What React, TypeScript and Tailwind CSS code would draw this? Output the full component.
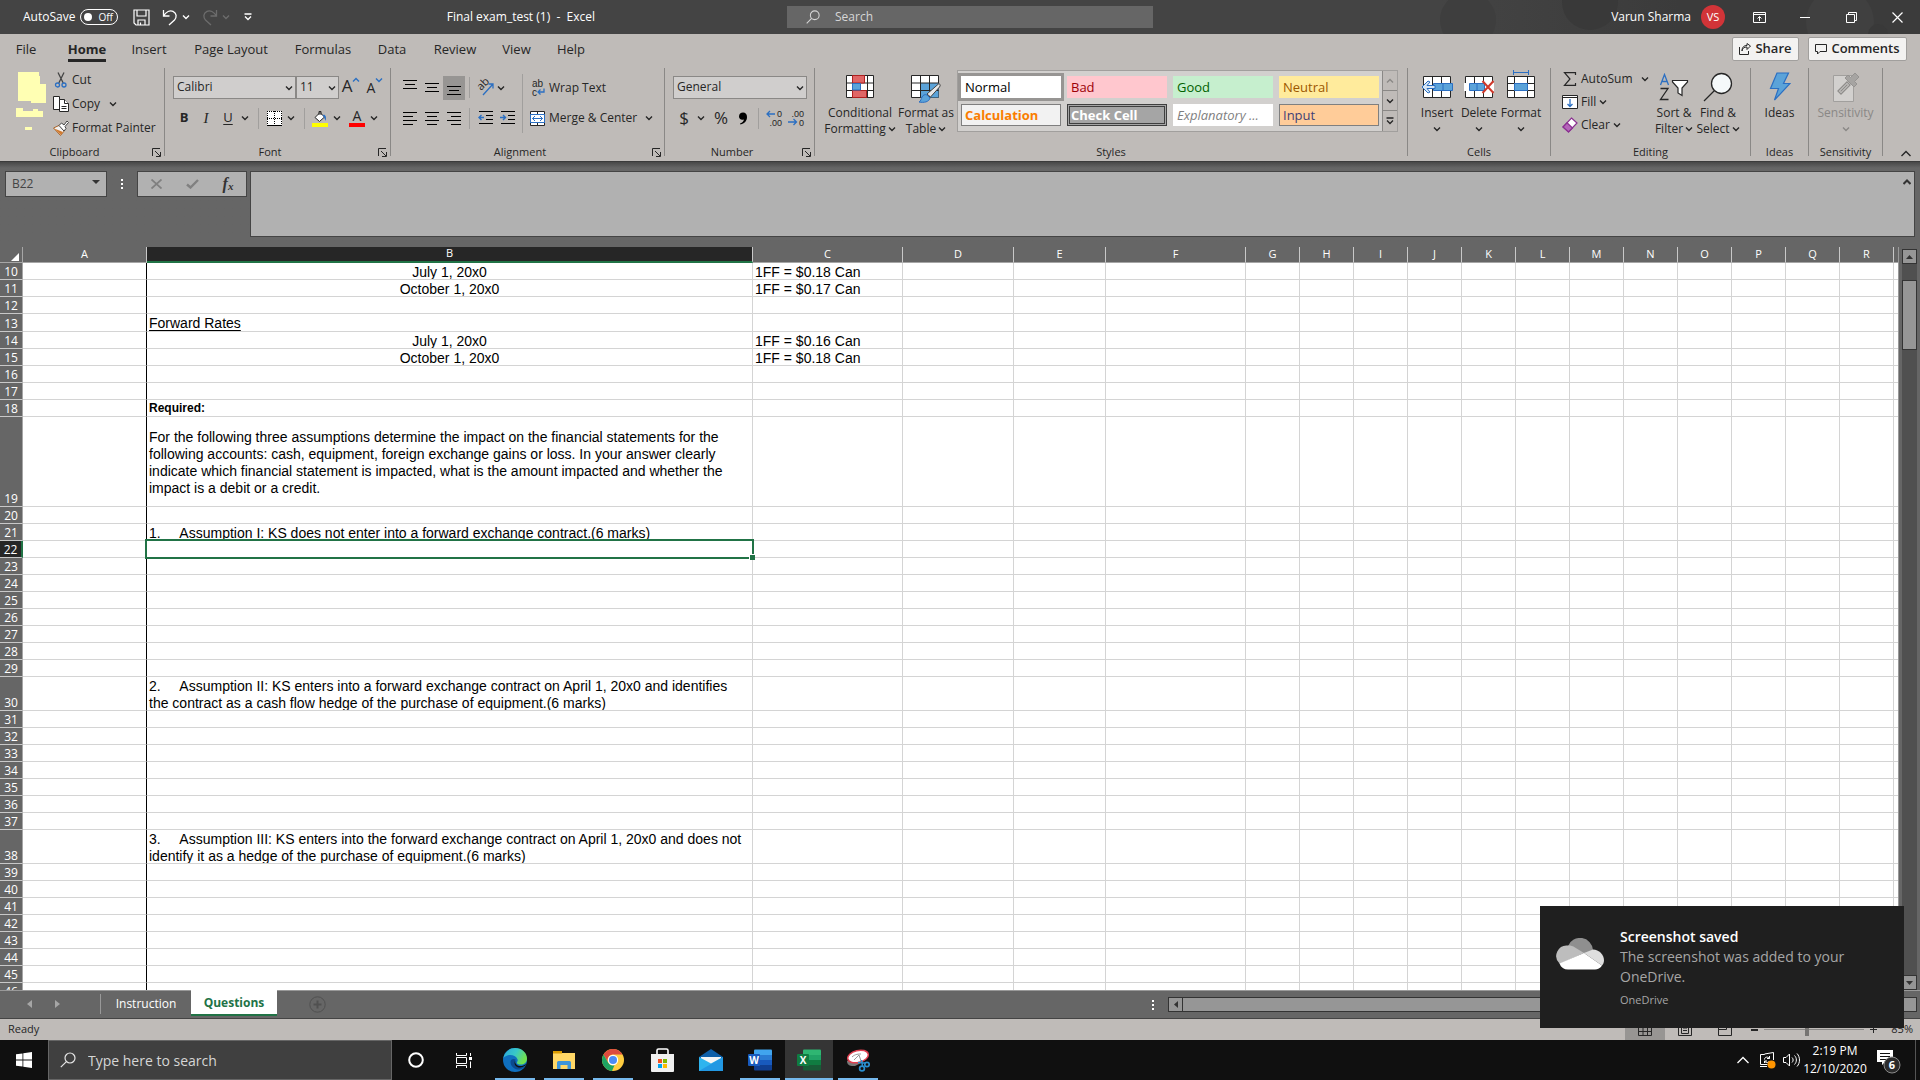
import type { ReactNode } from "react";
import clsx from "clsx";

const INK = "#262626";
const BLUE = "#2b6fc2";

/* ---------- shared bits ---------- */

function Chevron({ color = INK, up = false }: { color?: string; up?: boolean }) {
  return (
    <svg width="8" height="8" viewBox="0 0 8 8" fill="none" className="shrink-0">
      <path d={up ? "M1 5.5 4 2.5 7 5.5" : "M1 2.5 4 5.5 7 2.5"} stroke={color} strokeWidth="1.4" />
    </svg>
  );
}

function Magnifier({ size, color }: { size: number; color: string }) {
  return (
    <svg width={size} height={size} viewBox="0 0 16 16" fill="none" stroke={color} strokeWidth="1.2" className="shrink-0">
      <circle cx="10" cy="6" r="5" />
      <path d="M6.4 9.6 0.8 15.2" />
    </svg>
  );
}

function ToolButton({ label, className, children }: { label: string; className?: string; children: ReactNode }) {
  return (
    <button type="button" aria-label={label} className={clsx("flex h-6 items-center justify-center shrink-0", className)}>
      {children}
    </button>
  );
}

function Combo({ label, value, className }: { label: string; value: string; className: string }) {
  return (
    <div className={clsx("relative h-[23px] shrink-0", className)}>
      <select
        aria-label={label}
        defaultValue={value}
        className="block h-full w-full appearance-none border border-[#8a8886] bg-[#d0cecd] pb-[2px] pl-[3px] text-[12px] text-[#262626] outline-none"
      >
        <option>{value}</option>
      </select>
      <span className="pointer-events-none absolute right-[3px] top-2">
        <Chevron />
      </span>
    </div>
  );
}

function Group({ name, launcher, className, children }: { name: string; launcher?: boolean; className: string; children: ReactNode }) {
  return (
    <section aria-label={name} className="flex shrink-0">
      <div className={clsx("flex h-[92px] flex-col", className)}>
        <div className="flex h-[76px]">{children}</div>
        <div className="flex h-4 items-center">
          <span className="flex-1 text-center text-[11px] leading-4">{name}</span>
          {launcher && (
            <ToolButton label={`${name} settings`} className="w-[15px]">
              <svg width="9" height="9" viewBox="0 0 9 9" fill="none" stroke={INK}>
                <path d="M0.5 8V0.5H8M3 3l5 5M8.5 4v4.5H4" />
              </svg>
            </ToolButton>
          )}
        </div>
      </div>
      <div className="h-[88px] w-px bg-[#8a8886]" />
    </section>
  );
}

function BigButton({ icon, lines, caret, disabled, className }: { icon: ReactNode; lines: string[]; caret?: boolean; disabled?: boolean; className: string }) {
  return (
    <button type="button" disabled={disabled} className={clsx("flex h-[70px] flex-col items-center text-[12px] leading-4 shrink-0", disabled && "text-[#8a8886]", className)}>
      <span className="flex h-[37px] items-center">{icon}</span>
      {lines.map((line, i) => (
        <span key={line} className="flex items-center gap-[2px] whitespace-nowrap">
          {line}
          {caret && lines.length > 1 && i === lines.length - 1 && <Chevron />}
        </span>
      ))}
      {caret && lines.length === 1 && (
        <span className="flex h-4 items-center">
          <Chevron color={disabled ? "#8a8886" : INK} />
        </span>
      )}
    </button>
  );
}

/* ---------- title bar ---------- */

function TitleBar() {
  return (
    <header className="relative grid h-[34px] shrink-0 grid-cols-[787fr_366fr_767fr] items-center bg-[#444444] text-[12px] text-white">
      <svg className="absolute right-0 top-0" width="480" height="34" viewBox="0 0 480 34">
        <defs>
          <linearGradient id="shade" x1="0" x2="1">
            <stop offset="0" stopColor="#444444" />
            <stop offset="0.5" stopColor="#3b3b3b" />
          </linearGradient>
        </defs>
        <rect width="480" height="34" fill="url(#shade)" />
        <circle cx="28" cy="20" r="28" fill="#3e3e3e" />
        <circle cx="150" cy="2" r="28" fill="#393939" />
        <circle cx="400" cy="22" r="34" fill="#404040" />
        <circle cx="438" cy="34" r="10" fill="#393939" />
      </svg>
      <div className="relative flex items-center pl-[23px]">
        <label className="flex items-center gap-[5px]">
          AutoSave
          <input type="checkbox" role="switch" className="sr-only" />
          <span className="flex h-4 w-[38px] items-center gap-[6px] rounded-full border border-white pl-[3px] text-[10px]">
            <span className="h-2 w-2 rounded-full bg-white" />
            Off
          </span>
        </label>
        <ToolButton label="Save" className="ml-[14px] w-[18px]">
          <svg width="17" height="17" viewBox="0 0 17 17" fill="none" stroke="#fff" strokeWidth="1.2">
            <path d="M1 1h15v15H3L1 14zM4 1v6h9V1M5 16v-5h7v5M7.5 13.5V16" />
          </svg>
        </ToolButton>
        <ToolButton label="Undo" className="ml-3 w-4">
          <svg width="16" height="18" viewBox="0 0 16 18" fill="none" stroke="#fff" strokeWidth="1.3">
            <path d="M1.5 2v6h6M1.5 8C4 3.5 8 2 11 3.3c4 2 3.8 6 1.5 8.7L7 17" />
          </svg>
        </ToolButton>
        <ToolButton label="Undo options" className="w-4">
          <Chevron color="#fff" />
        </ToolButton>
        <ToolButton label="Redo" className="ml-2 w-4">
          <svg width="16" height="18" viewBox="0 0 16 18" fill="none" stroke="#6c6c6c" strokeWidth="1.3">
            <path d="M14.5 2v6h-6M14.5 8C12 3.5 8 2 5 3.3c-4 2-3.8 6-1.5 8.7L9 17" />
          </svg>
        </ToolButton>
        <ToolButton label="Redo options" className="w-4">
          <Chevron color="#6c6c6c" />
        </ToolButton>
        <ToolButton label="Customize Quick Access Toolbar" className="ml-[6px] w-4">
          <svg width="8" height="8" viewBox="0 0 8 8" fill="none" stroke="#fff" strokeWidth="1.3">
            <path d="M0.5 1h7M1 3.5 4 6.5 7 3.5" />
          </svg>
        </ToolButton>
        <h1 className="ml-auto mr-[192px] whitespace-pre">Final exam_test (1)  -  Excel</h1>
      </div>
      <label className="relative flex h-[22px] items-center gap-[15px] bg-[#666666] pl-[19px]">
        <Magnifier size={14} color="#d6d6d6" />
        <input type="text" placeholder="Search" className="flex-1 bg-transparent outline-none placeholder:text-[#d6d6d6]" />
      </label>
      <div className="relative flex items-center justify-end">
        <span>Varun Sharma</span>
        <span className="ml-[10px] flex h-6 w-6 items-center justify-center rounded-full bg-[#d13438] text-[11px]">VS</span>
        <ToolButton label="Ribbon display options" className="ml-[11px] w-[46px]">
          <svg width="13" height="11" viewBox="0 0 13 11" fill="none" stroke="#fff">
            <path d="M0.5 0.5h12v10h-12zM0.5 2.5h12M6.5 9V4.5M4.5 6.5l2-2 2 2" />
          </svg>
        </ToolButton>
        <ToolButton label="Minimize" className="w-[46px]">
          <span className="h-px w-[10px] bg-white" />
        </ToolButton>
        <ToolButton label="Restore" className="w-[46px]">
          <svg width="11" height="11" viewBox="0 0 11 11" fill="none" stroke="#fff">
            <path d="M0.5 2.5h8v8h-8zM2.5 2.5v-2h8v8h-2" />
          </svg>
        </ToolButton>
        <ToolButton label="Close" className="w-[46px]">
          <svg width="11" height="11" viewBox="0 0 11 11" fill="none" stroke="#fff" strokeWidth="1.2">
            <path d="M0.5 0.5l10 10M10.5 0.5l-10 10" />
          </svg>
        </ToolButton>
      </div>
    </header>
  );
}

/* ---------- ribbon ---------- */

const ribbonTabs = [
  { name: "File", width: "w-[52px]" },
  { name: "Home", width: "w-[70px]" },
  { name: "Insert", width: "w-[54px]" },
  { name: "Page Layout", width: "w-[110px]" },
  { name: "Formulas", width: "w-[74px]" },
  { name: "Data", width: "w-[64px]" },
  { name: "Review", width: "w-[62px]" },
  { name: "View", width: "w-[61px]" },
  { name: "Help", width: "w-[48px]" },
];

function RibbonTabs() {
  return (
    <div className="flex h-[34px] items-start">
      <nav className="flex items-start text-[13px] leading-5">
        {ribbonTabs.map((tab) => (
          <button key={tab.name} type="button" className={clsx("flex h-7 justify-center whitespace-nowrap pt-[5px]", tab.width)}>
            <span className={clsx("h-[23px] border-b-[3px]", tab.name === "Home" ? "border-[#262626] font-bold" : "border-transparent")}>{tab.name}</span>
          </button>
        ))}
      </nav>
      <div className="ml-auto mr-[13px] mt-[3px] flex gap-[9px] text-[13px] font-semibold">
        <button type="button" className="flex h-6 w-[67px] items-center justify-center gap-1 rounded-xs border border-[#a19f9d] bg-[#f3f2f1]">
          <svg width="12" height="12" viewBox="0 0 12 12" fill="none" stroke={INK}>
            <path d="M0.5 4v7.5h9V8M3 8c0.5-3 2-4 5-4v2.5L11.500 3 8 0.500V2.500C5 2.500 3 4 3 8z" />
          </svg>
          Share
        </button>
        <button type="button" className="flex h-6 w-[99px] items-center justify-center gap-1 rounded-xs border border-[#a19f9d] bg-[#f3f2f1]">
          <svg width="12" height="11" viewBox="0 0 12 11" fill="none" stroke={INK}>
            <path d="M0.5 0.5h11v7H5l-2.500 2.500V7.500h-2z" />
          </svg>
          Comments
        </button>
      </div>
    </div>
  );
}

function ClipboardGroup() {
  return (
    <Group name="Clipboard" launcher className="w-[164px]">
      <button type="button" aria-label="Paste" className="ml-4 mt-1 h-[60px] w-[30px]">
        <svg width="30" height="60" viewBox="0 0 30 60" fill="#ffffb3">
          <path d="M2 0h21v4h1v8h6v19H15v-2H2zM0 36h7v3h10v-2h5v2h5v6H0zM9 55h7v3H9z" />
        </svg>
      </button>
      <div className="ml-[7px] flex flex-col text-[12px]">
        <button type="button" className="flex h-6 items-center gap-[3px]">
          <svg width="16" height="16" viewBox="0 0 16 16" fill="none">
            <path d="M5 0.500 10.200 11M11 0.500 5.800 11" stroke="#444" strokeWidth="1.300" />
            <circle cx="4.500" cy="13" r="2" stroke={BLUE} strokeWidth="1.300" />
            <circle cx="11" cy="13" r="2" stroke={BLUE} strokeWidth="1.300" />
          </svg>
          Cut
        </button>
        <button type="button" className="flex h-6 items-center gap-[3px]">
          <svg width="16" height="16" viewBox="0 0 16 16" fill="#fff" stroke={INK}>
            <path d="M0.500 0.500h6v13h-6z" />
            <path d="M6.500 3.500h5l4 4v8h-9z" />
            <path d="M11.500 3.500v4h4M8.500 10.500h5M8.500 12.500h5" />
          </svg>
          Copy
          <span className="ml-[6px]">
            <Chevron />
          </span>
        </button>
        <button type="button" className="flex h-6 items-center gap-[3px]">
          <svg width="16" height="16" viewBox="0 0 16 16">
            <path d="M0.500 8 7 5l5 5-4.500 5.500z" fill="#f3f2f1" stroke="#a8642a" />
            <path d="M1 8.500l7 6.500 2-3-5-2z" fill="#d17a2f" />
            <path d="M6 5.500 8.500 3 11 5l3-4 1.500 1.500-3.500 4 1 2L11 11z" fill="#fff" stroke="#444" />
          </svg>
          <span className="whitespace-nowrap">Format Painter</span>
        </button>
      </div>
    </Group>
  );
}

function VSep({ className }: { className?: string }) {
  return <span className={clsx("h-[21px] w-px shrink-0 bg-[#a19f9d]", className)} />;
}

function FontGroup() {
  return (
    <Group name="Font" launcher className="w-[225px]">
      <div className="flex flex-col pl-2 pt-2">
        <div className="flex h-[23px] items-center">
          <Combo label="Font name" value="Calibri" className="w-[123px]" />
          <Combo label="Font size" value="11" className="w-[43px]" />
          <ToolButton label="Increase font size" className="ml-1 w-4 items-start text-[17px] leading-5">
            A<Chevron color={BLUE} up />
          </ToolButton>
          <ToolButton label="Decrease font size" className="ml-2 w-4 items-start text-[14px] leading-6">
            A<Chevron color={BLUE} />
          </ToolButton>
        </div>
        <div className="mt-[7px] flex h-6 items-center text-[13px]">
          <ToolButton label="Bold" className="w-[22px] font-bold">B</ToolButton>
          <ToolButton label="Italic" className="w-[22px] font-['Liberation_Serif',serif] text-[15px] italic">I</ToolButton>
          <ToolButton label="Underline" className="w-[22px] underline underline-offset-2">U</ToolButton>
          <ToolButton label="Underline options" className="w-3">
            <Chevron />
          </ToolButton>
          <VSep className="ml-[7px]" />
          <ToolButton label="Borders" className="ml-[6px] w-[18px]">
            <svg width="15" height="15" viewBox="0 0 15 15" stroke="#000">
              <rect width="15" height="15" fill="#fff" stroke="none" />
              <path d="M0 0.500h15M0.500 0v15M14.500 0v15M7.500 0v15M0 7.500h15" strokeDasharray="1 1" />
              <path d="M0 14.500h15" />
            </svg>
          </ToolButton>
          <ToolButton label="Border options" className="w-4">
            <Chevron />
          </ToolButton>
          <VSep className="ml-[5px]" />
          <ToolButton label="Fill color" className="ml-[5px] w-5">
            <svg width="16" height="17" viewBox="0 0 16 17">
              <path d="M3 7.500 8 2.500l4.500 4.500-5 4.500z" fill="#fff" stroke={INK} />
              <path d="M7 5V1.500h2V5" fill="none" stroke={INK} />
              <path d="M12 4.500c2 1 2.500 3 1.500 6.500-1-3-1.500-4-3-5.500z" fill={BLUE} />
              <rect y="13" width="16" height="4" fill="#ffff00" />
            </svg>
          </ToolButton>
          <ToolButton label="Fill color options" className="w-[14px]">
            <Chevron />
          </ToolButton>
          <ToolButton label="Font color" className="w-[26px] flex-col">
            <span className="text-[14px] leading-3">A</span>
            <span className="mt-px h-1 w-4 bg-[#ff0000]" />
          </ToolButton>
          <ToolButton label="Font color options" className="w-2">
            <Chevron />
          </ToolButton>
        </div>
      </div>
    </Group>
  );
}

function Lines({ d }: { d: string }) {
  return (
    <svg width="14" height="15" viewBox="0 0 14 15" fill="none" stroke="#000">
      <path d={d} />
    </svg>
  );
}

function Indent({ d }: { d: string }) {
  return (
    <svg width="15" height="14" viewBox="0 0 15 14" fill="none">
      <path d="M1 0.500h14M8 4.500h7M8 8.500h7M1 12.500h14" stroke="#000" />
      <path d={d} stroke={BLUE} strokeWidth="1.400" />
    </svg>
  );
}

function AlignmentGroup() {
  return (
    <Group name="Alignment" launcher className="w-[273px]">
      <div className="flex flex-col pl-2 pt-2">
        <div className="flex h-[23px] items-center">
          <ToolButton label="Top align" className="w-[22px]"><Lines d="M0 0.500h14M2 4.500h10M0 8.500h14" /></ToolButton>
          <ToolButton label="Middle align" className="w-[22px]"><Lines d="M0 3.500h14M2 7.500h10M0 11.500h14" /></ToolButton>
          <ToolButton label="Bottom align" className="w-[22px] bg-[#979593]"><Lines d="M0 6.500h14M2 10.500h10M0 14.500h14" /></ToolButton>
          <VSep className="ml-[4px]" />
          <ToolButton label="Orientation" className="ml-[7px] w-[17px]">
            <svg width="17" height="17" viewBox="0 0 17 17" fill="none" className="overflow-visible">
              <text x="0" y="0" fontSize="11" fill={INK} transform="translate(4 12) rotate(-45)">ab</text>
              <path d="M6 16 16 5M11.500 5H16v4.500" stroke={BLUE} strokeWidth="1.300" />
            </svg>
          </ToolButton>
          <ToolButton label="Orientation options" className="w-[14px]"><Chevron /></ToolButton>
        </div>
        <div className="mt-[7px] flex h-6 items-center">
          <ToolButton label="Align left" className="w-[22px]"><Lines d="M0 1.500h14M0 5.500h10M0 9.500h14M0 13.500h10" /></ToolButton>
          <ToolButton label="Center" className="w-[22px]"><Lines d="M0 1.500h14M2 5.500h10M0 9.500h14M2 13.500h10" /></ToolButton>
          <ToolButton label="Align right" className="w-[22px]"><Lines d="M0 1.500h14M4 5.500h10M0 9.500h14M4 13.500h10" /></ToolButton>
          <VSep className="ml-[4px]" />
          <ToolButton label="Decrease indent" className="ml-[4px] w-[22px]"><Indent d="M6 6.500H1M3.500 4 1 6.500 3.500 9" /></ToolButton>
          <ToolButton label="Increase indent" className="w-[22px]"><Indent d="M0 6.500h5.500M3 4l2.500 2.500L3 9" /></ToolButton>
        </div>
      </div>
      <span className="ml-1 mt-[6px] h-[59px] w-px bg-[#a19f9d]" />
      <div className="flex flex-col pl-[7px] pt-2 text-[12px]">
        <button type="button" className="flex h-[23px] items-center gap-1">
          <svg width="15" height="18" viewBox="0 0 15 18" fill="none" fontFamily="Liberation Sans" className="overflow-visible">
            <text x="2" y="8" fontSize="10" fill={INK}>ab</text>
            <text x="2" y="17" fontSize="10" fill={INK}>c</text>
            <path d="M14 9.500V13H8M10.500 10.500 8 13l2.500 2.500" stroke={BLUE} strokeWidth="1.300" />
          </svg>
          Wrap Text
        </button>
        <button type="button" className="mt-[7px] flex h-6 items-center gap-1 whitespace-nowrap">
          <svg width="15" height="15" viewBox="0 0 15 15" fill="#fff" stroke={INK}>
            <path d="M0.500 0.500h14v14h-14zM7.500 0.500v14" />
            <rect x="0.500" y="3.500" width="14" height="8" stroke={BLUE} />
            <path d="M2.500 7.500h10M5 5 2.500 7.500 5 10M10 5l2.500 2.500L10 10" fill="none" stroke={BLUE} />
          </svg>
          Merge &amp; Center
          <span className="ml-1"><Chevron /></span>
        </button>
      </div>
    </Group>
  );
}

function Decimals({ top, bottom, arrow }: { top: string; bottom: string; arrow: string }) {
  return (
    <svg width="16" height="18" viewBox="0 0 16 18" fill="none" fontFamily="Liberation Sans" className="overflow-visible">
      <text x="16" y="8" fontSize="9" textAnchor="end" fill={INK}>{top}</text>
      <text x="16" y="17" fontSize="9" textAnchor="end" fill={INK}>{bottom}</text>
      <path d={arrow} stroke={BLUE} strokeWidth="1.300" />
    </svg>
  );
}

function NumberGroup() {
  return (
    <Group name="Number" launcher className="w-[149px]">
      <div className="flex flex-col pl-2 pt-2">
        <Combo label="Number format" value="General" className="w-[134px]" />
        <div className="mt-[7px] flex h-6 items-center text-[17px]">
          <ToolButton label="Accounting format" className="w-[22px]">$</ToolButton>
          <ToolButton label="Accounting options" className="w-3"><Chevron /></ToolButton>
          <ToolButton label="Percent style" className="ml-[3px] w-[22px]">%</ToolButton>
          <ToolButton label="Comma style" className="w-[22px]">
            <svg width="8" height="13" viewBox="0 0 8 13" fill="#000">
              <path d="M4 0.500c2.500 0 4 1.500 4 4.500 0 4-2.500 6.500-6.500 7.500L1 11.500C3.500 10.500 4.800 9 5 7.500 2 8.500 0 6.800 0 4.500 0 2 1.800 0.500 4 0.500z" />
            </svg>
          </ToolButton>
          <VSep className="ml-[4px]" />
          <ToolButton label="Increase decimal" className="ml-[4px] w-[22px]"><Decimals top="0" bottom=".00" arrow="M9 5H1M4 2 1 5l3 3" /></ToolButton>
          <ToolButton label="Decrease decimal" className="w-[22px]"><Decimals top=".00" bottom="0" arrow="M0 13h8.500M5.500 10l3 3-3 3" /></ToolButton>
        </div>
      </div>
    </Group>
  );
}

const cellStyles = [
  { name: "Normal", look: "bg-white pl-1 text-black ring-[3px] ring-[#979593]" },
  { name: "Bad", look: "bg-[#ffc7ce] pl-1 text-[#9c0006]" },
  { name: "Good", look: "bg-[#c6efce] pl-1 text-[#006100]" },
  { name: "Neutral", look: "bg-[#ffeb9c] pl-1 text-[#9c5700]" },
  { name: "Calculation", look: "border border-[#7f7f7f] bg-[#f2f2f2] pl-[3px] font-bold text-[#fa7d00]" },
  { name: "Check Cell", look: "border-[3px] border-double border-[#3f3f3f] bg-[#a5a5a5] pl-px font-bold text-white" },
  { name: "Explanatory ...", look: "bg-white pl-1 italic text-[#7f7f7f]" },
  { name: "Input", look: "border border-[#7f7f7f] bg-[#ffcc99] pl-[3px] text-[#3f3f76]" },
];

function StylesGroup() {
  return (
    <Group name="Styles" className="w-[592px]">
      <BigButton
        className="ml-[10px] w-[70px]"
        lines={["Conditional", "Formatting"]}
        caret
        icon={
          <svg width="28" height="24" viewBox="0 0 28 24" stroke={INK}>
            <path d="M0.500 0.500h27v22h-27z" fill="#fff" />
            <path d="M0.500 8h27M0.500 15.500h27M6.500 0.500v22M21.500 0.500v22" fill="none" />
            <path d="M6.500 0.500h12v7.500h-12zM6.500 15.500h14v7h-14z" fill="#e06666" stroke="#b02020" />
            <path d="M6.500 8.500h8v6.500h-8z" fill="#5ba3d9" stroke={BLUE} />
          </svg>
        }
      />
      <BigButton
        className="w-[62px]"
        lines={["Format as", "Table"]}
        caret
        icon={
          <svg width="30" height="28" viewBox="0 0 30 28" className="mt-1">
            <path d="M0.500 0.500h27v22h-27z" fill="#fff" stroke={INK} />
            <path d="M9.500 8h18v14.500h-18z" fill="#5ba3d9" />
            <path d="M0.500 8h27M0.500 15.500h27M9.500 0.500v22M18.500 0.500v22" stroke={INK} />
            <path d="M28 8.500c1.500 1 1.500 2 0.500 3.500l-9 10-3.500-3z" fill="#e8e8e8" stroke="#444" />
            <path d="M16 20l3 3c-1 4-6 5-11 4 2-1 2-3 3-5s3-3 5-2z" fill="#5ba3d9" stroke={BLUE} />
          </svg>
        }
      />
      <div className="mt-[2px] flex h-[62px] border border-[#a19f9d] bg-[#d2d0ce]">
        <div className="grid grid-cols-[repeat(4,100px)] content-start gap-[6px] px-[3px] pt-[5px]">
          {cellStyles.map((s) => (
            <button key={s.name} type="button" className={clsx("flex h-[22px] items-center whitespace-nowrap text-[13px] leading-4", s.look)}>
              {s.name}
            </button>
          ))}
        </div>
        <div className="grid w-[15px] grid-rows-3 divide-y divide-[#8a8886] border-l border-[#8a8886] bg-[#bfbbb8]">
          <button type="button" aria-label="Scroll styles up" className="flex items-center justify-center"><Chevron up color="#8a8886" /></button>
          <button type="button" aria-label="Scroll styles down" className="flex items-center justify-center"><Chevron /></button>
          <button type="button" aria-label="More styles" className="flex items-center justify-center">
            <svg width="8" height="8" viewBox="0 0 8 8" fill="none" stroke={INK} strokeWidth="1.300">
              <path d="M0.500 1h7M1 3.500 4 6.500 7 3.500" />
            </svg>
          </button>
        </div>
      </div>
    </Group>
  );
}

function CellsGroup() {
  return (
    <Group name="Cells" className="w-[142px]">
      <BigButton
        className="ml-2 w-[42px]"
        lines={["Insert"]}
        caret
        icon={
          <svg width="32" height="24" viewBox="0 0 32 24" stroke={INK}>
            <path d="M2.500 1.500h27v21h-27zM11.500 1.500v21M20.500 1.500v21" fill="#fff" />
            <path d="M12.500 8.500h19v7h-19zM22 8.500v7" fill="#5ba3d9" stroke={BLUE} />
            <path d="M14 10.500H6l3-3.500-2-1L1 12l6 6 2-1-3-3.500h8z" fill="#d6e6f5" stroke={BLUE} />
          </svg>
        }
      />
      <BigButton
        className="w-[42px]"
        lines={["Delete"]}
        caret
        icon={
          <svg width="31" height="24" viewBox="0 0 31 24" stroke={INK}>
            <path d="M1.500 1.500h27v21h-27zM10.500 1.500v21M19.500 1.500v21" fill="#fff" />
            <path d="M0 8h30v8H0z" fill="#fff" stroke="none" />
            <path d="M5.500 8.500h15v7h-15zM13 8.500v7" fill="#5ba3d9" stroke={BLUE} />
            <path d="M18.500 6 29.500 18M29.500 6l-11 12" stroke="#d0392b" strokeWidth="2" />
          </svg>
        }
      />
      <BigButton
        className="w-[42px]"
        lines={["Format"]}
        caret
        icon={
          <svg width="28" height="34" viewBox="0 0 28 34" stroke={INK}>
            <path d="M6.500 2.500h15M6.500 0v5M21.500 0v5" stroke={BLUE} fill="none" />
            <path d="M0.500 6.500h27v21h-27zM0.500 13.500h27M0.500 20.500h27M7.500 6.500v21M20.500 6.500v21" fill="#fff" />
            <path d="M7.500 13.500h13v7h-13z" fill="#5ba3d9" stroke={BLUE} />
          </svg>
        }
      />
    </Group>
  );
}

function EditingGroup() {
  return (
    <Group name="Editing" className="w-[199px]">
      <div className="flex w-[102px] flex-col pl-[11px] text-[12px]">
        <button type="button" className="flex h-[22px] items-center gap-[3px]">
          <svg width="16" height="14" viewBox="0 0 16 14" fill="none" stroke={INK} strokeWidth="1.200">
            <path d="M13.500 3V0.700H2.500L8 7l-5.500 6.300h11V11" />
          </svg>
          AutoSum
          <span className="ml-[5px]"><Chevron /></span>
        </button>
        <button type="button" className="flex h-[23px] items-center gap-[3px]">
          <svg width="16" height="14" viewBox="0 0 16 14" fill="#fff" stroke={INK}>
            <path d="M0.500 0.500h15v13h-15zM0.500 2.500h15" />
            <path d="M8 4v7.500M5.500 9 8 11.500 10.500 9" fill="none" stroke={BLUE} strokeWidth="1.300" />
          </svg>
          Fill
          <Chevron />
        </button>
        <button type="button" className="flex h-[23px] items-center gap-[3px]">
          <svg width="16" height="16" viewBox="0 0 16 16" fill="#fff" stroke="#8a2f91" strokeWidth="1.200">
            <path d="M9.500 1 15 6l-8.500 9L1 10z" />
            <path d="M5 5.800 10.500 11l-4 4L1 10z" fill="#b565ba" />
          </svg>
          Clear
          <Chevron />
        </button>
      </div>
      <BigButton
        className="w-[42px]"
        lines={["Sort &", "Filter"]}
        caret
        icon={
          <svg width="30" height="28" viewBox="0 0 30 28" fill="none">
            <path d="M1.500 12 5.500 1.500 9.500 12M3 8.500h5" stroke={BLUE} strokeWidth="1.300" />
            <path d="M1.500 15.500h7.500L1.500 26.500h8" stroke={INK} strokeWidth="1.300" />
            <path d="M13.500 7.500h15v1.500l-5.500 6v7.500l-4-2.500v-5l-5.500-6z" fill="#fff" stroke={INK} strokeWidth="1.200" />
          </svg>
        }
      />
      <BigButton
        className="w-[46px]"
        lines={["Find &", "Select"]}
        caret
        icon={
          <svg width="30" height="30" viewBox="0 0 30 30" fill="none" stroke={INK} strokeWidth="1.300">
            <circle cx="18.500" cy="11.500" r="10" fill="#f5f9fa" />
            <path d="M11.500 18.500 1 29" />
          </svg>
        }
      />
    </Group>
  );
}

function Ribbon() {
  return (
    <div className="flex h-32 shrink-0 flex-col border-b border-[#3b3b3b] bg-[#bfbbb8] text-[#262626]">
      <RibbonTabs />
      <div className="flex">
        <ClipboardGroup />
        <FontGroup />
        <AlignmentGroup />
        <NumberGroup />
        <StylesGroup />
        <CellsGroup />
        <EditingGroup />
        <Group name="Ideas" className="w-[57px]">
          <BigButton
            className="w-[57px]"
            lines={["Ideas"]}
            icon={
              <svg width="22" height="29" viewBox="0 0 22 29">
                <path d="M8 1h11.500l-5 10.500H21L5.500 28l4-11.500H1.500z" fill="#5ba3d9" stroke={BLUE} strokeWidth="1.200" />
              </svg>
            }
          />
        </Group>
        <Group name="Sensitivity" className="w-[73px]">
          <BigButton
            className="w-[73px]"
            lines={["Sensitivity"]}
            caret
            disabled
            icon={
              <svg width="28" height="30" viewBox="0 0 28 30">
                <path d="M1.500 3.500h20v26h-20z" fill="#d2d0ce" stroke="#a19f9d" />
                <path d="M6 19l9-9 3 3-9 9zM8.500 19.500l7-7" fill="none" stroke="#8f8d8b" strokeWidth="1.300" />
                <path d="M13 6l3-3 2.500 2.500L23 1l4 4-4.500 4.500L25 12l-3 3z" fill="#a6a4a2" stroke="#959391" />
              </svg>
            }
          />
        </Group>
        <button type="button" aria-label="Collapse the ribbon" className="ml-auto mr-[9px] mt-[81px] h-2 w-[10px]">
          <svg width="10" height="7" viewBox="0 0 10 7" fill="none" stroke={INK} strokeWidth="1.400">
            <path d="M0.500 6 5 1.500 9.500 6" />
          </svg>
        </button>
      </div>
    </div>
  );
}

/* ---------- formula bar ---------- */

function FormulaBar() {
  return (
    <div className="flex h-[85px] shrink-0 items-start bg-linear-to-b from-[#484848] to-[#666666] to-[6px] pl-[5px] pr-[5px] pt-[9px]">
      <label className="flex h-[26px] w-[102px] items-center border border-[#444444] bg-[#b1b1b1] pr-[6px]">
        <input type="text" aria-label="Name box" defaultValue="B22" className="w-full min-w-0 bg-transparent pl-[6px] text-[12px] text-[#444444] outline-none" />
        <svg width="8" height="4" viewBox="0 0 8 4" className="mb-1 shrink-0" fill="#333"><path d="M0 0h8L4 4z" /></svg>
      </label>
      <span className="ml-[14px] mt-2 flex flex-col gap-[2px]">
        <i className="h-[2px] w-[2px] bg-white" />
        <i className="h-[2px] w-[2px] bg-white" />
        <i className="h-[2px] w-[2px] bg-white" />
      </span>
      <div className="ml-[14px] flex h-[26px] w-[110px] items-center border border-[#444444] bg-[#b1b1b1]">
        <ToolButton label="Cancel" className="w-9">
          <svg width="11" height="10" viewBox="0 0 11 10" stroke="#808080" strokeWidth="1.800"><path d="M0.500 0.500l10 9M10.500 0.500l-10 9" /></svg>
        </ToolButton>
        <ToolButton label="Enter" className="w-9">
          <svg width="13" height="10" viewBox="0 0 13 10" fill="none" stroke="#808080" strokeWidth="2.400"><path d="M1 5.500 4.500 8.500 12 1" /></svg>
        </ToolButton>
        <ToolButton label="Insert function" className="w-9 font-['Liberation_Serif',serif] text-[16px] font-bold italic text-[#333333]">
          f<span className="mt-1 text-[11px]">x</span>
        </ToolButton>
      </div>
      <div className="relative ml-[3px] h-[66px] flex-1">
        <textarea aria-label="Formula bar" className="block h-full w-full resize-none border border-[#444444] bg-[#b1b1b1] outline-none" />
        <button type="button" aria-label="Collapse formula bar" className="absolute right-1 top-2">
          <svg width="8" height="6" viewBox="0 0 8 6" fill="none" stroke="#333" strokeWidth="2" className="block"><path d="M0.500 5 4 1.500 7.500 5" /></svg>
        </button>
      </div>
    </div>
  );
}

/* ---------- sheet ---------- */

const columns = [
  { name: "A", width: "w-[124px]" },
  { name: "B", width: "w-[606px]" },
  { name: "C", width: "w-[150px]" },
  { name: "D", width: "w-[111px]" },
  { name: "E", width: "w-[92px]" },
  { name: "F", width: "w-[140px]" },
  ...["G", "H", "I", "J", "K", "L", "M", "N", "O", "P", "Q", "R"].map((name) => ({ name, width: "w-[54px]" })),
];

const rowNumbers = Array.from({ length: 37 }, (_, i) => i + 10);

const rowHeights: Record<number, string> = {
  13: "h-[18px]",
  19: "h-[90px]",
  30: "h-[34px]",
  38: "h-[34px]",
};

const single = "h-4 pt-px text-[14px]";

const cells: Record<string, { lines: string[]; look: string }> = {
  B10: { lines: ["July 1, 20x0"], look: "h-4 pt-px text-center text-[14px]" },
  C10: { lines: ["1FF = $0.18 Can"], look: single },
  B11: { lines: ["October 1, 20x0"], look: "h-4 pt-px text-center text-[14px]" },
  C11: { lines: ["1FF = $0.17 Can"], look: single },
  B13: { lines: ["Forward Rates"], look: "h-[17px] pt-px text-[14px] underline underline-offset-2" },
  B14: { lines: ["July 1, 20x0"], look: "h-4 pt-px text-center text-[14px]" },
  C14: { lines: ["1FF = $0.16 Can"], look: single },
  B15: { lines: ["October 1, 20x0"], look: "h-4 pt-px text-center text-[14px]" },
  C15: { lines: ["1FF = $0.18 Can"], look: single },
  B18: { lines: ["Required:"], look: "h-4 text-[12px] font-bold" },
  B19: {
    lines: [
      "For the following three assumptions determine the impact on the financial statements for the",
      "following accounts: cash, equipment, foreign exchange gains or loss. In your answer clearly",
      "indicate which financial statement is impacted, what is the amount impacted and whether the",
      "impact is a debit or a credit.",
    ],
    look: "pt-3 text-[14px]",
  },
  B21: { lines: ["1.     Assumption I: KS does not enter into a forward exchange contract.(6 marks)"], look: single },
  B30: {
    lines: [
      "2.     Assumption II: KS enters into a forward exchange contract on April 1, 20x0 and identifies",
      "the contract as a cash flow hedge of the purchase of equipment.(6 marks)",
    ],
    look: "h-[33px] pt-px text-[14px]",
  },
  B38: {
    lines: [
      "3.     Assumption III: KS enters into the forward exchange contract on April 1, 20x0 and does not",
      "identify it as a hedge of the purchase of equipment.(6 marks)",
    ],
    look: "h-[33px] pt-px text-[14px]",
  },
};

function Sheet() {
  return (
    <table className="w-full table-fixed border-separate border-spacing-0 bg-white">
      <colgroup>
        <col className="w-[23px]" />
        {columns.map((c) => (
          <col key={c.name} className={c.width} />
        ))}
        <col />
      </colgroup>
      <thead>
        <tr className="h-4 text-[11px] leading-3 text-white">
          <th className="border-b border-r border-[#a6a6a6] bg-[#666666] p-0">
            <svg width="8" height="8" viewBox="0 0 8 8" fill="#fff" className="ml-auto mr-[3px] mt-1"><path d="M8 0v8H0z" /></svg>
          </th>
          {columns.map((c) => (
            <th
              key={c.name}
              scope="col"
              className={clsx(
                "border-r border-r-[#c8c8c8] px-0 pb-[2px] pt-0 font-normal",
                c.name === "B" ? "border-b-2 border-b-[#217346] bg-[#262626]" : "border-b border-b-[#a6a6a6] bg-[#666666]",
              )}
            >
              {c.name}
            </th>
          ))}
          <td className="border-b border-[#a6a6a6] bg-[#666666]" />
        </tr>
      </thead>
      <tbody>
        {rowNumbers.map((n) => (
          <tr key={n} className={rowHeights[n] ?? "h-[17px]"}>
            <th
              scope="row"
              className={clsx(
                "border-b border-r border-b-[#c8c8c8] p-0 text-center align-bottom text-[12px] font-normal leading-[14px] text-white",
                n === 22 ? "border-r-2 border-r-[#217346] bg-[#262626]" : "border-r-[#a6a6a6] bg-[#666666]",
              )}
            >
              {n}
            </th>
            {columns.map((c) => {
              const cell = cells[`${c.name}${n}`];
              const selected = c.name === "B" && n === 22;
              return (
                <td
                  key={c.name}
                  className={clsx("border-b border-r border-b-[#d4d4d4] p-0 align-top", c.name === "A" ? "border-r-black" : "border-r-[#d4d4d4]", selected && "relative")}
                >
                  {cell && (
                    <div className={clsx("overflow-hidden whitespace-pre px-[2px] font-['Liberation_Sans',Arial,sans-serif] leading-[17px] text-black", cell.look)}>
                      {cell.lines.map((line) => (
                        <p key={line}>{line}</p>
                      ))}
                    </div>
                  )}
                  {selected && (
                    <span className="absolute -inset-[2px] border-2 border-[#217346]">
                      <i className="absolute -bottom-[3px] -right-[3px] h-[6px] w-[6px] border-l border-t border-white bg-[#217346]" />
                    </span>
                  )}
                </td>
              );
            })}
            <td className="border-b border-[#d4d4d4]" />
          </tr>
        ))}
      </tbody>
    </table>
  );
}

function VerticalScroll() {
  return (
    <div className="ml-[3px] mr-[3px] mt-[2px] flex w-[15px] flex-col bg-[#505050]">
      <button type="button" aria-label="Scroll up" className="flex h-[15px] items-center justify-center border border-[#333333] bg-[#969696]">
        <svg width="7" height="4" viewBox="0 0 7 4" fill="#333"><path d="M0 4h7L3.500 0z" /></svg>
      </button>
      <div className="mt-4 h-[70px] border border-[#333333] bg-[#969696]" />
      <button type="button" aria-label="Scroll down" className="mt-auto flex h-[15px] items-center justify-center border border-[#333333] bg-[#969696]">
        <svg width="7" height="4" viewBox="0 0 7 4" fill="#333"><path d="M0 0h7L3.500 4z" /></svg>
      </button>
    </div>
  );
}

function SheetTabs() {
  return (
    <div className="flex h-[29px] shrink-0 items-start border-b border-t border-b-[#444444] border-t-[#999999] bg-[#666666] text-[12px] text-white">
      <button type="button" aria-label="Previous sheet" className="ml-[27px] mt-[9px] w-[6px]">
        <svg width="5" height="8" viewBox="0 0 5 8" fill="#a6a6a6"><path d="M5 0v8L0 4z" /></svg>
      </button>
      <button type="button" aria-label="Next sheet" className="ml-[22px] mt-[9px] w-[6px]">
        <svg width="5" height="8" viewBox="0 0 5 8" fill="#a6a6a6"><path d="M0 0v8l5-4z" /></svg>
      </button>
      <span className="ml-[39px] mt-[3px] h-5 w-px bg-[#999999]" />
      <button type="button" className="h-[26px] w-[90px]">Instruction</button>
      <button type="button" className="-mt-px h-[26px] w-[86px] border-b-2 border-[#217346] bg-white pt-[2px] font-bold text-[#217346]">Questions</button>
      <button type="button" aria-label="New sheet" className="ml-8 mt-[5px]">
        <svg width="17" height="17" viewBox="0 0 17 17" fill="none" stroke="#505050">
          <circle cx="8.500" cy="8.500" r="7.700" />
          <path d="M8.500 4.500v8M4.500 8.500h8" strokeWidth="2" />
        </svg>
      </button>
      <span className="ml-auto mt-[9px] flex flex-col gap-[2px]">
        <i className="h-[2px] w-[2px] bg-white" />
        <i className="h-[2px] w-[2px] bg-white" />
        <i className="h-[2px] w-[2px] bg-white" />
      </span>
      <div className="ml-[14px] mr-[3px] mt-[6px] flex h-[15px] w-[39%] border border-[#333333] bg-[#969696]">
        <button type="button" aria-label="Scroll left" className="flex w-[14px] items-center justify-center border-r border-[#333333]">
          <svg width="4" height="7" viewBox="0 0 4 7" fill="#333"><path d="M4 0v7L0 3.500z" /></svg>
        </button>
      </div>
    </div>
  );
}

function StatusBar() {
  return (
    <div className="flex h-[21px] shrink-0 items-center bg-[#bfbbb8] pl-2 pr-[7px] text-[11px] text-[#262626]">
      <span>Ready</span>
      <button type="button" aria-label="Normal view" className="ml-auto flex h-full w-10 items-center justify-center bg-[#979593]">
        <svg width="14" height="13" viewBox="0 0 14 13" fill="none" stroke={INK}><path d="M0.500 0.500h13v12h-13zM5 0.500v12M9.500 0.500v12M0.500 4.500h13M0.500 8.500h13" /></svg>
      </button>
      <button type="button" aria-label="Page layout view" className="flex h-full w-10 items-center justify-center">
        <svg width="14" height="13" viewBox="0 0 14 13" fill="none" stroke={INK}><path d="M0.500 0.500h13v12h-13zM3.500 2.500h7v8h-7zM5 5h4M5 7.500h4" /></svg>
      </button>
      <button type="button" aria-label="Page break preview" className="flex h-full w-10 items-center justify-center">
        <svg width="14" height="13" viewBox="0 0 14 13" fill="none" stroke={INK}><path d="M0.500 0.500h13v12h-13zM0.500 6.500h8v-6" /></svg>
      </button>
      <button type="button" aria-label="Zoom out" className="ml-[6px] h-[2px] w-[7px] bg-[#262626]" />
      <div className="relative ml-[6px] mr-[6px] flex h-3 w-[100px] items-center">
        <span className="h-px w-full bg-[#8a8886]" />
        <span className="absolute left-[41%] top-0 h-3 w-1 bg-[#767472]" />
        <input type="range" aria-label="Zoom" min="10" max="400" defaultValue="85" className="absolute inset-0 w-full opacity-0" />
      </div>
      <button type="button" aria-label="Zoom in" className="w-[7px]">
        <svg width="7" height="7" viewBox="0 0 7 7" stroke={INK}><path d="M3.500 0v7M0 3.500h7" /></svg>
      </button>
      <span className="ml-[14px]">85%</span>
    </div>
  );
}

/* ---------- desktop ---------- */

function TaskButton({ label, open, active, children }: { label: string; open?: boolean; active?: boolean; children: ReactNode }) {
  return (
    <button type="button" aria-label={label} className={clsx("relative flex h-10 w-12 shrink-0 items-center justify-center", active && "bg-[#353535]")}>
      {children}
      {open && <span className={clsx("absolute bottom-0 h-[2px] bg-[#76b9ed]", active ? "inset-x-0" : "inset-x-1")} />}
    </button>
  );
}

function OfficeIcon({ letter, tones, badge }: { letter: string; tones: string[]; badge: string }) {
  return (
    <svg width="24" height="22" viewBox="0 0 24 22">
      <path d="M6 1.500A1 1 0 0 1 7 0.500h16a1 1 0 0 1 1 1V6H6z" fill={tones[0]} />
      <path d="M6 6h18v5H6z" fill={tones[1]} />
      <path d="M6 11h18v5H6z" fill={tones[2]} />
      <path d="M6 16h18v4.500a1 1 0 0 1-1 1H7a1 1 0 0 1-1-1z" fill={tones[3]} />
      <rect x="0" y="5" width="12" height="12" rx="1" fill={badge} />
      <text x="6" y="15" fontSize="10" fontWeight="700" textAnchor="middle" fill="#fff">{letter}</text>
    </svg>
  );
}

function Taskbar() {
  return (
    <footer className="flex h-10 shrink-0 items-center bg-[#101010] text-[12px] text-white">
      <TaskButton label="Start">
        <svg width="16" height="16" viewBox="0 0 16 16" fill="#fff">
          <path d="M0 2.300 6.500 1.400v6.200H0zM7.300 1.300 16 0v7.600H7.300zM0 8.400h6.500v6.200L0 13.700zM7.300 8.400H16V16l-8.700-1.200z" />
        </svg>
      </TaskButton>
      <label className="flex h-10 w-[344px] items-center gap-3 border border-[#666666] bg-[#404040] pl-[11px]">
        <Magnifier size={16} color="#e6e6e6" />
        <input type="text" placeholder="Type here to search" className="flex-1 bg-transparent text-[14px] outline-none placeholder:text-[#d6d6d6]" />
      </label>
      <TaskButton label="Cortana">
        <svg width="16" height="16" viewBox="0 0 16 16" fill="none" stroke="#fff" strokeWidth="2"><circle cx="8" cy="8" r="6.800" /></svg>
      </TaskButton>
      <TaskButton label="Task view">
        <svg width="16" height="15" viewBox="0 0 16 15" fill="none" stroke="#fff">
          <path d="M0.500 0v2.500h10V0M0.500 15v-2.500h10V15M0.500 4.500h10v6h-10zM14.500 0v3M14.500 8.500V15" />
          <path d="M13 4h3v3h-3z" fill="#fff" stroke="none" />
        </svg>
      </TaskButton>
      <div className="ml-[3px] flex gap-px">
        <TaskButton label="Microsoft Edge" open>
          <svg width="24" height="24" viewBox="0 0 24 24">
            <defs>
              <linearGradient id="edgeTop" x1="0" x2="1" y1="0" y2="0.400">
                <stop offset="0" stopColor="#2aa5dc" />
                <stop offset="0.550" stopColor="#38c8c8" />
                <stop offset="1" stopColor="#6fe04f" />
              </linearGradient>
            </defs>
            <circle cx="12" cy="12" r="12" fill="#0f6fbf" />
            <path d="M0.300 10C1.500 4 6.500 0 12 0c7 0 12 5 12 10.500 0 4-3 6-6 6-3.500 0-4.500-1.300-4-2.300 1-1.500 0.800-2.200 0.500-3C13 7.500 9 6.500 6 7c-2.500 0.500-4.500 1.500-5.700 3z" fill="url(#edgeTop)" />
            <path d="M7.500 14c0 4.500 4.500 8 9 7.500 2-0.300 4-1.500 5.500-3C18 20.500 13 18.500 12 16c-0.700-1.800-0.200-3 0.800-4.500C10 10 7.500 11.500 7.500 14z" fill="#0b4a8f" />
            <path d="M12.500 12.500c-1 2 0.500 5 4 5.500 2.500 0.300 4.500-0.500 6-1.800l0.700 0.600c-1.700 1.700-4 2.700-6.200 2.700-3 0-5.500-2-5.500-4.800 0-1 0.400-1.700 1-2.200z" fill="#101010" />
          </svg>
        </TaskButton>
        <TaskButton label="File Explorer" open>
          <svg width="22" height="18" viewBox="0 0 22 18">
            <path d="M0 2h22v16H0z" fill="#ffd766" />
            <path d="M0 0h9v2.500H0z" fill="#d99a00" />
            <path d="M4 18v-6.500A1.500 1.500 0 0 1 5.500 10h11a1.500 1.500 0 0 1 1.500 1.500V18h-3.500v-4h-7v4z" fill="#3e95d9" />
          </svg>
        </TaskButton>
        <TaskButton label="Google Chrome" open>
          <svg width="22" height="22" viewBox="0 0 22 22">
            <circle cx="11" cy="11" r="11" fill="#ffcd40" />
            <path d="M1.500 5.500A11 11 0 0 1 20.500 5.500H11a5.500 5.500 0 0 0-4.800 8.200z" fill="#dd4b3e" />
            <path d="M1.500 5.500 6.200 13.700A5.500 5.500 0 0 0 12.500 16.200L10 22A11 11 0 0 1 1.500 5.500z" fill="#1da462" />
            <circle cx="11" cy="11" r="5.200" fill="#fff" />
            <circle cx="11" cy="11" r="4" fill="#4c8bf5" />
          </svg>
        </TaskButton>
        <TaskButton label="Microsoft Store">
          <svg width="23" height="24" viewBox="0 0 23 24">
            <path d="M6 7V2.500A1.500 1.500 0 0 1 7.500 1h8A1.500 1.500 0 0 1 17 2.500V7" fill="none" stroke="#fff" strokeWidth="1.600" />
            <path d="M0 6h23v17a1 1 0 0 1-1 1H1a1 1 0 0 1-1-1z" fill="#f0f0f0" />
            <path d="M7 11h4v4H7z" fill="#f25022" />
            <path d="M12 11h4v4h-4z" fill="#7fba00" />
            <path d="M7 16h4v4H7z" fill="#00a4ef" />
            <path d="M12 16h4v4h-4z" fill="#ffb900" />
          </svg>
        </TaskButton>
        <TaskButton label="Mail">
          <svg width="24" height="22" viewBox="0 0 24 22">
            <path d="M0 8 12 0l12 8v3H0z" fill="#0f5fa8" />
            <path d="M2 8h20v7H2z" fill="#f5f5f5" />
            <path d="M0 8l12 6.500L24 8v14H0z" fill="#2fb4ee" />
            <path d="M0 22 24 8v14z" fill="#1b86dc" opacity="0.600" />
          </svg>
        </TaskButton>
        <TaskButton label="Word" open>
          <OfficeIcon letter="W" tones={["#41a5ee", "#2b7cd3", "#185abd", "#103f91"]} badge="#185abd" />
        </TaskButton>
        <TaskButton label="Excel" open active>
          <OfficeIcon letter="X" tones={["#2fb672", "#21a366", "#107c41", "#185c37"]} badge="#107c41" />
        </TaskButton>
        <TaskButton label="Snipping Tool" open>
          <svg width="24" height="23" viewBox="0 0 24 23" fill="none">
            <path d="M1 12c0 4 3 5.500 8 5l8-4-2-6z" fill="#777" />
            <ellipse cx="12" cy="7.500" rx="10.500" ry="6" transform="rotate(-14 12 7.500)" fill="#fff" stroke="#e04050" strokeWidth="1.500" />
            <path d="M6 8c3-3 7-3 9-3M8 11l5-5 2 6" stroke="#999" />
            <circle cx="16" cy="19.500" r="2.400" stroke="#2a8fd0" strokeWidth="1.700" />
            <circle cx="21" cy="15.500" r="2.200" stroke="#2a8fd0" strokeWidth="1.700" />
            <path d="M12 13.500 20 14M16.500 17l-1-6" stroke="#2a8fd0" strokeWidth="1.500" />
          </svg>
        </TaskButton>
      </div>
      <div className="ml-auto flex h-10 items-center">
        <ToolButton label="Show hidden icons" className="w-6">
          <svg width="12" height="8" viewBox="0 0 12 8" fill="none" stroke="#fff" strokeWidth="1.300"><path d="M0.500 7 6 1.500 11.500 7" /></svg>
        </ToolButton>
        <ToolButton label="Updates" className="w-6">
          <svg width="17" height="17" viewBox="0 0 17 17" fill="none" stroke="#fff">
            <path d="M14.500 8V0.500l-9 1.500v0.500h-4v10h7M1 14.500h7M5.500 7.500c0-3 4-3 5-1M10.500 4v2.500H8M10.500 9c-1 2-4 2-5 0M5.500 11V9H8" />
            <circle cx="12.500" cy="12.500" r="4" fill="#ff9500" stroke="none" />
          </svg>
        </ToolButton>
        <ToolButton label="Volume" className="w-6">
          <svg width="17" height="14" viewBox="0 0 17 14" fill="none" stroke="#fff">
            <path d="M0.500 4.500h2.500l3.500-3.500v12L3 9.500H0.500zM9 4.500c1.500 1.500 1.500 3.500 0 5M11.500 2.500c2.500 2.500 2.500 6.500 0 9M14 0.500c3.300 3.500 3.300 9.500 0 13" />
          </svg>
        </ToolButton>
        <button type="button" className="w-16 text-center leading-[18px]">
          2:19 PM
          <br />
          12/10/2020
        </button>
        <ToolButton label="6 notifications" className="w-11">
          <svg width="26" height="26" viewBox="0 0 26 26" className="mt-1">
            <path d="M1 1h16v12H9l-3 3v-3H1z" fill="#fff" />
            <path d="M4 4.500h10M4 7.500h10M4 10.500h6" stroke="#101010" strokeWidth="1.200" />
            <circle cx="16" cy="16" r="8" fill="#2b2b2b" stroke="#8a8a8a" />
            <text x="16" y="20" fontSize="11" fontWeight="700" textAnchor="middle" fill="#fff">6</text>
          </svg>
        </ToolButton>
        <span className="ml-1 mr-1 h-10 w-px bg-[#555555]" />
      </div>
    </footer>
  );
}

function Toast() {
  return (
    <aside className="absolute bottom-[52px] right-4 flex h-[122px] w-[364px] items-start bg-[#1f1f1f] pl-4 pt-[21px]">
      <svg width="48" height="32" viewBox="0 0 48 32" className="mt-[11px] shrink-0">
        <path d="M12 8a13 13 0 0 1 25 4L28 16z" fill="#8f8f8f" />
        <path d="M3.500 25.500A10.500 10.500 0 0 1 12 7.500c3 0 5 0.500 7 2L28 15 4 26z" fill="#bdbdbd" />
        <path d="M28 15l9-3.500c6 0 11 5 11 11 0 2-1 4-2 5z" fill="#dedede" />
        <path d="M3.500 25.500 28 15l18 12.500c-1.500 2.500-4.500 4-7 4H12c-4 0-7-2-8.500-6z" fill="#fff" />
      </svg>
      <div className="ml-4 text-[14px] leading-5 text-[#a6a6a6]">
        <p className="font-semibold text-white">Screenshot saved</p>
        <p>The screenshot was added to your</p>
        <p>OneDrive.</p>
        <p className="mt-[3px] text-[11px] leading-5">OneDrive</p>
      </div>
    </aside>
  );
}

export default function App() {
  return (
    <div className="relative flex h-screen flex-col overflow-hidden font-['Open_Sans','Segoe_UI',sans-serif]">
      <TitleBar />
      <Ribbon />
      <FormulaBar />
      <main className="flex min-h-0 flex-1 bg-[#666666]">
        <div className="min-w-0 flex-1 overflow-hidden border-r border-[#999999]">
          <Sheet />
        </div>
        <VerticalScroll />
      </main>
      <SheetTabs />
      <StatusBar />
      <Taskbar />
      <Toast />
    </div>
  );
}
